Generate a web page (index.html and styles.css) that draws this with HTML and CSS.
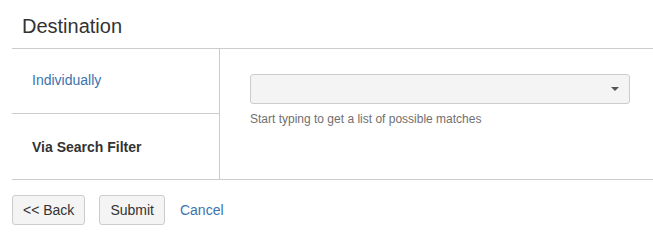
FILE: index.html
```html
<!DOCTYPE html>
<html lang="en">
<head>
  <meta charset="UTF-8">
  <title>Destination</title>
  <link rel="stylesheet" href="styles.css">
</head>
<body>
  <h2 class="title">Destination</h2>

  <div class="panel">
    <ul class="tabs">
      <li class="tab"><a href="#">Individually</a></li>
      <li class="tab active">Via Search Filter</li>
    </ul>
    <div class="content">
      <div class="select">
        <span class="caret"></span>
      </div>
      <div class="hint">Start typing to get a list of possible matches</div>
    </div>
  </div>

  <div class="actions">
    <button>&lt;&lt; Back</button>
    <button>Submit</button>
    <a href="#" class="cancel">Cancel</a>
  </div>
</body>
</html>
```

FILE: styles.css
```css
body { font-family: Arial, "Liberation Sans", sans-serif; font-size: 14px; color: #333; margin: 0 0 0 12px; }
a { color: #3b73af; text-decoration: none; }

.title { font-size: 20px; font-weight: normal; margin: 0; padding: 14px 10px 0; height: 49px; box-sizing: border-box; line-height: 24px; border-bottom: 1px solid #ccc; }

.panel { display: flex; border-bottom: 1px solid #ccc; }
.tabs { list-style: none; margin: 0; padding: 0; width: 207px; border-right: 1px solid #ccc; }
.tab { height: 64px; display: flex; align-items: center; padding-left: 20px; padding-bottom: 2px; box-sizing: border-box; }
.tab + .tab { border-top: 1px solid #ccc; height: 66px; padding-bottom: 0; }
.tab.active { font-weight: bold; }

.content { padding: 25px 0 0 30px; }
.select { position: relative; width: 380px; height: 30px; box-sizing: border-box; background: #f4f4f4; border: 1px solid #ccc; border-radius: 3px; }
.caret { position: absolute; right: 10px; top: 12px; border-left: 4px solid transparent; border-right: 4px solid transparent; border-top: 4px solid #555; }
.hint { font-size: 12px; color: #707070; margin-top: 8px; }

.actions { display: flex; align-items: center; padding-top: 15px; }
button { font-family: inherit; font-size: 14px; color: #333; background: #f4f4f4; border: 1px solid #ccc; border-radius: 3px; height: 30px; padding: 0 10px; margin-right: 14px; cursor: pointer; }
.cancel { margin-left: 1px; }
```
